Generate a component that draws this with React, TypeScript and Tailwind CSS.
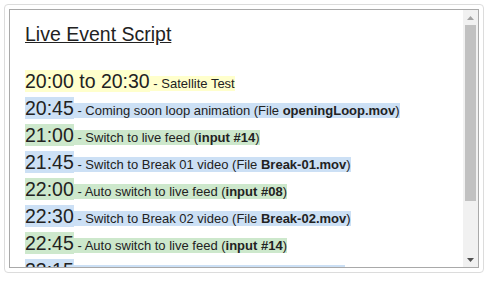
type Row = {
  time: string;
  bg: string;
  text: string;
  bold?: string;
  end?: string;
};

const rows: Row[] = [
  { time: '20:00 to 20:30', bg: 'bg-[#ffffcc]', text: ' - Satellite Test ' },
  { time: '20:45', bg: 'bg-[#cce0f5]', text: ' - Coming soon loop animation (File ', bold: 'openingLoop.mov', end: ')' },
  { time: '21:00', bg: 'bg-[#cde8cc]', text: ' - Switch to live feed (', bold: 'input #14', end: ')' },
  { time: '21:45', bg: 'bg-[#cce0f5]', text: ' - Switch to Break 01 video (File ', bold: 'Break-01.mov', end: ')' },
  { time: '22:00', bg: 'bg-[#cde8cc]', text: ' - Auto switch to live feed (', bold: 'input #08', end: ')' },
  { time: '22:30', bg: 'bg-[#cce0f5]', text: ' - Switch to Break 02 video (File ', bold: 'Break-02.mov', end: ')' },
  { time: '22:45', bg: 'bg-[#cde8cc]', text: ' - Auto switch to live feed (', bold: 'input #14', end: ')' },
  { time: '23:15', bg: 'bg-[#cce0f5]', text: ' - Switch to closing loop video (File ', bold: 'outro.mov', end: ')' },
  { time: '23:30', bg: 'bg-[#ffffcc]', text: ' - End of broadcast ' },
];

function Scrollbar() {
  return (
    <div className="flex w-[15px] shrink-0 flex-col bg-[#f1f1f1]">
      <div className="flex h-[15px] items-center justify-center">
        <svg width="7" height="4" viewBox="0 0 7 4">
          <path d="M3.5 0 L7 4 L0 4 Z" fill="#a3a3a3" />
        </svg>
      </div>
      <div className="flex-1 px-[2px]">
        <div className="h-[176px] bg-[#c1c1c1]" />
      </div>
      <div className="flex h-[15px] items-center justify-center">
        <svg width="7" height="4" viewBox="0 0 7 4">
          <path d="M0 0 L7 0 L3.5 4 Z" fill="#505050" />
        </svg>
      </div>
    </div>
  );
}

export default function App() {
  return (
    <div className="p-1 font-['Liberation_Sans',Arial,sans-serif] text-[#222]">
      <div className="w-[480px] rounded-[4px] border border-[#dcdcdc] p-1">
        <div className="flex h-[259px] border border-[#a9a9a9] bg-white">
          <div className="min-w-0 flex-1 overflow-hidden pl-[15px] pt-[13px]">
            <div className="mb-[24px] text-[19.5px] leading-[23px] underline">Live Event Script</div>
            {rows.map((r) => (
              <div key={r.time} className="whitespace-nowrap text-[13px] leading-[27px]">
                <span className={`${r.bg} text-[19.5px] leading-[22px]`}>{r.time}</span>
                <span className={r.bg}>
                  {r.text}
                  {r.bold && <b>{r.bold}</b>}
                  {r.end}
                </span>
              </div>
            ))}
          </div>
          <Scrollbar />
        </div>
      </div>
    </div>
  );
}
